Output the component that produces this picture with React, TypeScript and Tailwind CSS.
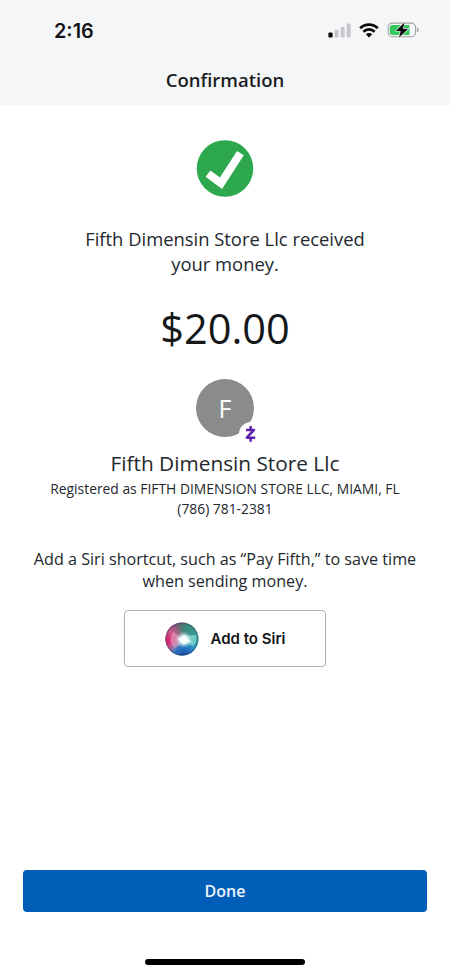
import React from 'react';

interface PaymentInfo {
  recipient: string;
  registeredAs: string;
  phone: string;
  amount: string;
}

const PAYMENT: PaymentInfo = {
  recipient: 'Fifth Dimensin Store Llc',
  registeredAs: 'FIFTH DIMENSION STORE LLC, MIAMI, FL',
  phone: '(786) 781-2381',
  amount: '$20.00',
};

const SignalIcon = () => (
  <svg width="24" height="16" viewBox="0 0 24 16">
    <rect x="1.4" y="10.4" width="4.2" height="5" rx="1.2" fill="#0b0b0c" />
    <rect x="7.6" y="7.8" width="4" height="7.6" rx="1.2" fill="#c5c6c9" />
    <rect x="13.6" y="5" width="4" height="10.4" rx="1.2" fill="#c5c6c9" />
    <rect x="19.6" y="1.6" width="4" height="13.8" rx="1.2" fill="#c5c6c9" />
  </svg>
);

const WifiIcon = () => (
  <svg width="20" height="15" viewBox="0 0 20 15" fill="none" stroke="#0b0b0c" strokeWidth="2.7">
    <path d="M1.2 5.2C6.2 0.4 13.8 0.4 18.8 5.2" />
    <path d="M4.4 8.7C7.6 5.6 12.4 5.6 15.6 8.7" />
    <path d="M10 14.6L6.8 11.3C8.6 9.7 11.4 9.7 13.2 11.3Z" fill="#0b0b0c" stroke="none" />
  </svg>
);

const BatteryIcon = () => (
  <svg width="33" height="18" viewBox="0 0 33 18">
    <rect x="1.2" y="2.1" width="27.4" height="13.6" rx="4.2" fill="none" stroke="#9fa3a5" strokeWidth="1.1" />
    <path d="M5.4 3.9H22.5V13.9H5.4A2.6 2.6 0 0 1 2.8 11.3V6.5A2.6 2.6 0 0 1 5.4 3.9Z" fill="#35c759" />
    <path d="M30.2 6.6C32.1 7.4 32.1 10.4 30.2 11.2Z" fill="#8d9092" />
    <path
      d="M17.6 1.2L8.9 9.9H13.7L12 16.8L21.2 7.7H15.9Z"
      fill="#0b0b0c"
      stroke="#f5f6f8"
      strokeWidth="1.2"
      paintOrder="stroke"
      strokeLinejoin="round"
    />
  </svg>
);

const SuccessIcon = () => (
  <svg width="58" height="58" viewBox="0 0 58 58">
    <circle cx="29" cy="28.5" r="28.3" fill="#2ea84f" />
    <path d="M12 33.6L25 43.2L44.4 13.2" fill="none" stroke="#fff" strokeWidth="8" />
  </svg>
);

const ZelleMark = () => (
  <svg width="12" height="18" viewBox="0 0 12 18" fill="none" stroke="#5f20b4" strokeWidth="2.5">
    <path d="M1 4.9H9L1.8 12.7H10.2" strokeLinejoin="round" />
    <path d="M5.6 1V4.9M5.6 12.7V16.8" />
  </svg>
);

const SiriOrb = () => (
  <svg width="34" height="34" viewBox="0 0 34 34">
    <defs>
      <radialGradient id="siri-pink" cx="0.04" cy="0.55" r="0.6">
        <stop offset="0" stopColor="#d81f6c" />
        <stop offset="0.5" stopColor="#d6588f" stopOpacity="0.9" />
        <stop offset="1" stopColor="#d6588f" stopOpacity="0" />
      </radialGradient>
      <radialGradient id="siri-blue" cx="0.56" cy="1" r="0.52">
        <stop offset="0" stopColor="#1a4a9c" />
        <stop offset="0.5" stopColor="#2375c9" stopOpacity="0.9" />
        <stop offset="1" stopColor="#37a5dc" stopOpacity="0" />
      </radialGradient>
      <radialGradient id="siri-glow" cx="0.56" cy="0.52" r="0.25">
        <stop offset="0" stopColor="#fff" />
        <stop offset="0.4" stopColor="#f6fdfe" stopOpacity="0.9" />
        <stop offset="1" stopColor="#c8ecf0" stopOpacity="0" />
      </radialGradient>
      <radialGradient id="siri-edge">
        <stop offset="0.86" stopColor="#2a2350" stopOpacity="0" />
        <stop offset="1" stopColor="#2a2350" stopOpacity="0.4" />
      </radialGradient>
      <linearGradient id="siri-base" x1="0" y1="0" x2="1" y2="0.8">
        <stop offset="0.1" stopColor="#8b3f70" />
        <stop offset="0.45" stopColor="#3c8a78" />
        <stop offset="1" stopColor="#31b0b8" />
      </linearGradient>
    </defs>
    <circle cx="17" cy="17" r="16.5" fill="url(#siri-base)" />
    <circle cx="17" cy="17" r="16.5" fill="url(#siri-pink)" />
    <circle cx="17" cy="17" r="16.5" fill="url(#siri-blue)" />
    <path d="M20 18C15 15 11 11 8 10C4 15 5 23 10 26C13 24 16 21 20 18Z" fill="#f6b9d0" opacity="0.45" />
    <path d="M16 17C21 14 25 13 31 13C32 17 31 21 28 24C24 22 20 20 16 17Z" fill="#a5efea" opacity="0.55" />
    <path d="M12 17C16 16 17 13 21 13C21 16 24 18 27 20C23 20 21 22 18 23C18 20 15 19 12 17Z" fill="#fff" opacity="0.7" />
    <circle cx="17" cy="17" r="16.5" fill="url(#siri-glow)" />
    <circle cx="17" cy="17" r="16.5" fill="url(#siri-edge)" />
  </svg>
);

const StatusBar = () => (
  <div className="flex h-[60px] items-center justify-between pl-[54px] pr-[30px]">
    <span className="pt-px font-['Inter',sans-serif] text-[19.8px] font-semibold leading-[22px] text-[#121315]">2:16</span>
    <div className="flex items-center gap-[8px]">
      <SignalIcon />
      <WifiIcon />
      <BatteryIcon />
    </div>
  </div>
);

const Avatar = ({ letter }: { letter: string }) => (
  <div className="relative flex size-[58px] items-center justify-center rounded-full bg-[#8a8b8d]">
    <span className="text-[25px] leading-none text-white">{letter}</span>
    <div className="absolute -bottom-[9px] -right-[9px] flex size-[24px] items-center justify-center rounded-full bg-white">
      <ZelleMark />
    </div>
  </div>
);

export default function App() {
  return (
    <div className="flex h-[974px] w-[450px] flex-col bg-white font-['Open_Sans','Noto_Sans',sans-serif] text-[#23282d]">
      <header className="h-[105px] bg-[#f5f6f8]">
        <StatusBar />
        <h1 className="pt-[6px] text-center text-[18.5px] font-semibold leading-[27px] text-[#1b1e22]">Confirmation</h1>
      </header>

      <main className="flex flex-1 flex-col items-center pt-[35px] text-center">
        <SuccessIcon />
        <p className="mt-[28px] w-[300px] text-[18.4px] leading-[25px]">{`${PAYMENT.recipient} received your money.`}</p>
        <p className="mt-[24px] text-[41.5px] leading-[56px] text-[#15181b]">{PAYMENT.amount}</p>
        <div className="mt-[23px]">
          <Avatar letter={PAYMENT.recipient[0]} />
        </div>
        <h2 className="mt-[12px] text-[20.8px] leading-[28px]">{PAYMENT.recipient}</h2>
        <p className="mt-[2px] text-[13.85px] leading-[20px]">{`Registered as ${PAYMENT.registeredAs}`}</p>
        <p className="text-[13.85px] leading-[20px]">{PAYMENT.phone}</p>
        <p className="mt-[29px] w-[400px] text-[16.15px] leading-[22px]">
          Add a Siri shortcut, such as “Pay Fifth,” to save time when sending money.
        </p>
        <button className="mt-[18px] flex h-[57px] w-[202px] items-center justify-center gap-[12px] rounded-[4px] border border-[#b0b1b3] bg-white">
          <SiriOrb />
          <span className="pt-px font-['Inter',sans-serif] text-[15px] font-semibold text-[#111214]">Add to Siri</span>
        </button>
      </main>

      <footer className="flex flex-col items-center px-[23px] pb-[9px]">
        <button className="h-[42px] w-full rounded-[4px] bg-[#005eb8] text-[16px] font-semibold text-[#eef5fc]">Done</button>
        <div className="mt-[47px] h-[6px] w-[160px] rounded-full bg-black" />
      </footer>
    </div>
  );
}
